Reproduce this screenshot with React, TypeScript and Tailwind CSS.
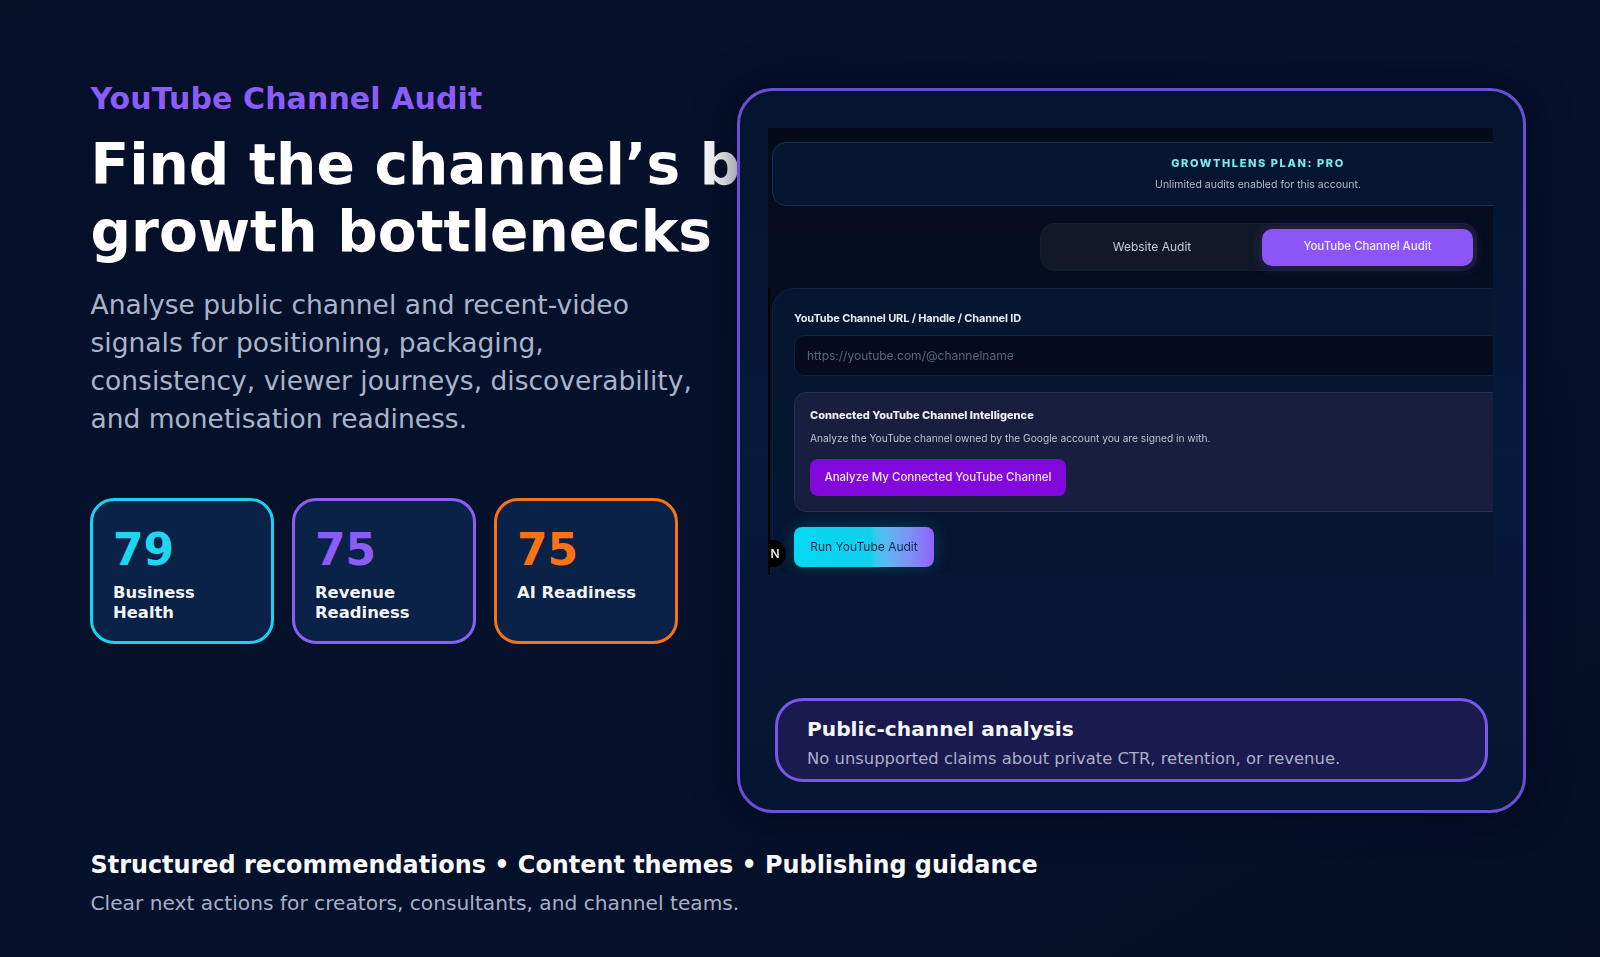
const dejavu = "font-['DejaVu_Sans',sans-serif]";

function ScoreCard({ score, label, border, text }: { score: string; label: string; border: string; text: string }) {
  return (
    <div className={`w-[184px] h-[146px] shrink-0 rounded-[24px] border-[3px] ${border} bg-[#0a2148] pl-[20px] pr-[20px] pt-[24px]`}>
      <p className={`text-[44px] leading-[50px] font-bold ${text}`}>{score}</p>
      <p className="mt-[8px] text-[16.4px] leading-[20px] font-bold text-[#f1f5f9]">{label}</p>
    </div>
  );
}

function AuditMock() {
  return (
    <div className="relative h-[447px] w-[725px] overflow-hidden bg-gradient-to-b from-[#040a18] via-[#050f26] to-[#061835] pt-[14px] pl-[4px] font-['Inter',sans-serif] blur-[0.45px]">
      <div className="absolute left-0 top-[160px] h-[287px] w-[2px] bg-black" />
      <div className="w-[972px] h-[64px] rounded-[14px] border border-[#13305a] bg-[#061530] pt-[12px] text-center">
        <p className="text-[11px] leading-[16px] font-extrabold tracking-[1.6px] text-[#7ce8ec]">GROWTHLENS PLAN: PRO</p>
        <p className="mt-[7px] text-[10.5px] leading-[14px] text-[#b4bccb]">Unlimited audits enabled for this account.</p>
      </div>
      <div className="mt-[17px] ml-[268px] flex h-[48px] w-[437px] items-center rounded-[14px] border border-[#161d30] bg-[#111828] pl-[4px]">
        <div className="w-[214px] text-center text-[12px] text-[#c4cad6]">Website Audit</div>
        <div className="ml-[3px] flex h-[37px] w-[211px] items-center justify-center rounded-[10px] bg-[#8b55f7] text-[11.5px] font-medium text-[#f3eeff] shadow-[0_0_14px_rgba(139,85,247,0.25)]">YouTube Channel Audit</div>
      </div>
      <div className="mt-[17px] w-[740px] rounded-tl-[22px] rounded-bl-[22px] border-t border-l border-[#10203e] bg-[#061530] pl-[21px] pt-[22px] pb-[8px]">
        <p className="text-[11px] leading-[14px] font-bold tracking-[-0.15px] text-[#e6e9f0]">YouTube Channel URL / Handle / Channel ID</p>
        <div className="mt-[10px] flex h-[41px] items-center rounded-[10px] border border-[#12213e] bg-[#040b1e] pl-[12px] text-[12px] text-[#5c6678]">https://youtube.com/@channelname</div>
        <div className="mt-[16px] h-[120px] rounded-[12px] border border-[#262d52] bg-[#181e3e] pl-[15px] pt-[15px]">
          <p className="text-[11px] leading-[14px] font-extrabold text-[#eef0f6]">Connected YouTube Channel Intelligence</p>
          <p className="mt-[9px] text-[10.2px] leading-[14px] text-[#bcc2d0]">Analyze the YouTube channel owned by the Google account you are signed in with.</p>
          <div className="mt-[14px] flex h-[37px] w-[256px] items-center justify-center rounded-[8px] bg-[#8208dc] text-[11.5px] font-medium text-[#f3e8ff]">Analyze My Connected YouTube Channel</div>
        </div>
        <div className="mt-[15px] flex h-[40px] w-[140px] items-center justify-center rounded-[8px] bg-gradient-to-r from-[#05d9f2] via-[#0cd0ee] via-55% to-[#9260f8] text-[12px] text-[#0b2a4e] shadow-[0_0_18px_rgba(6,182,212,0.25)]">Run YouTube Audit</div>
      </div>
      <div className="absolute left-[-9px] top-[412px] flex h-[27px] w-[27px] items-center justify-center rounded-full bg-black pl-[5px] text-[12px] font-medium text-white">N</div>
    </div>
  );
}

export default function App() {
  return (
    <div className={`flex h-[957px] w-[1600px] flex-col overflow-hidden bg-gradient-to-br from-[#050f28] via-[#06112c] to-[#050e26] ${dejavu}`}>
      <div className="flex pt-[88px]">
        <div className="w-[737px] shrink-0 pl-[90.5px]">
          <p className="text-[30px] leading-[22px] font-bold tracking-[0.1px] text-[#8b5cf6]">YouTube Channel Audit</p>
          <h1 className="mt-[21px] whitespace-nowrap text-[56.6px] leading-[67px] font-bold text-white">
            Find the channel’s biggest
            <br />
            growth bottlenecks
          </h1>
          <p className="mt-[21px] w-[620px] text-[26.5px] leading-[38px] text-[#a9b4cb]">
            Analyse public channel and recent-video signals for positioning, packaging, consistency, viewer journeys, discoverability, and monetisation readiness.
          </p>
          <div className="mt-[60px] -ml-[0.5px] flex gap-[18px]">
            <ScoreCard score="79" label="Business Health" border="border-[#17d3ee]" text="text-[#1fd5f0]" />
            <ScoreCard score="75" label="Revenue Readiness" border="border-[#8b5cf6]" text="text-[#8b5cf6]" />
            <ScoreCard score="75" label="AI Readiness" border="border-[#f97316]" text="text-[#f97316]" />
          </div>
        </div>
        <div className="relative z-10 h-[725px] w-[789px] shrink-0 rounded-[36px] border-[3px] border-[#6a4fd6] bg-gradient-to-b from-[#05142e] via-[#071a3a] to-[#061531] pl-[28px] pt-[37px] shadow-[0_0_40px_rgba(2,6,23,0.7)]">
          <AuditMock />
          <div className="mt-[123px] ml-[7px] h-[84px] w-[713px] rounded-[28px] border-[3px] border-[#7a56ea] bg-[#1a1a4e] pl-[29px] pt-[14px]">
            <p className="text-[20.2px] leading-[28px] font-bold text-[#f4f6fb]">Public-channel analysis</p>
            <p className="mt-[4px] text-[16.4px] leading-[24px] text-[#a7b0c8]">No unsupported claims about private CTR, retention, or revenue.</p>
          </div>
        </div>
      </div>
      <div className="pl-[90.5px] pt-[37px]">
        <p className="text-[23.9px] leading-[30px] font-bold text-[#f8fafc]">Structured recommendations • Content themes • Publishing guidance</p>
        <p className="mt-[9px] text-[20.2px] leading-[28px] text-[#a7b0c8]">Clear next actions for creators, consultants, and channel teams.</p>
      </div>
    </div>
  );
}
